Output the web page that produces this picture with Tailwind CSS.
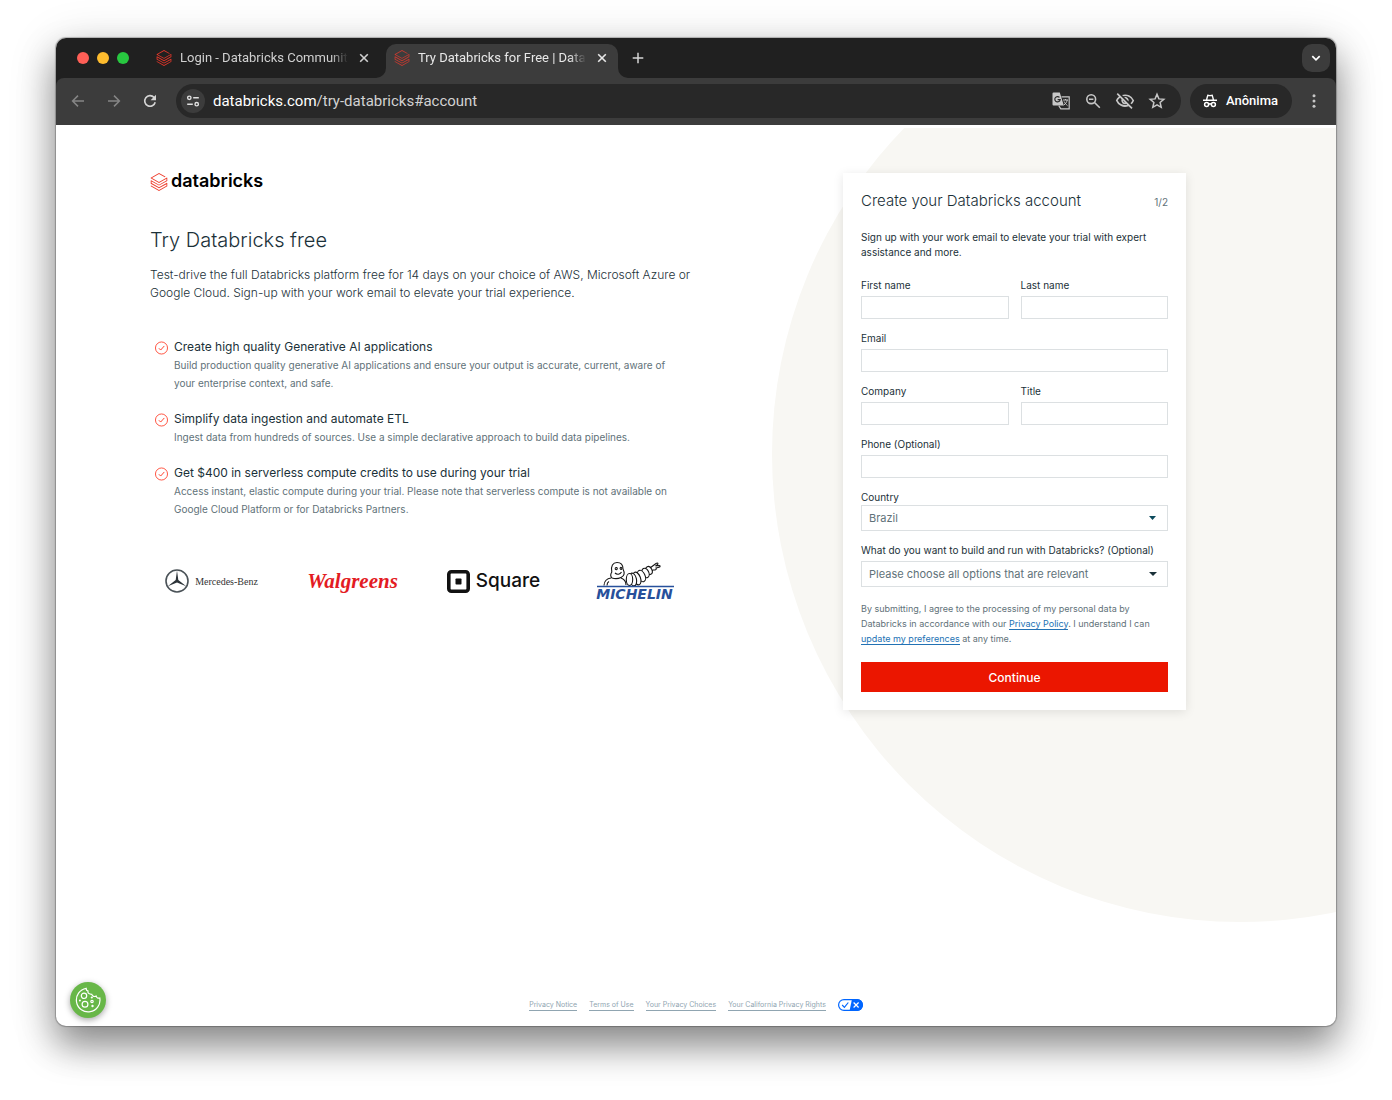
<!DOCTYPE html>
<html lang="en">
<head>
<meta charset="utf-8">
<meta name="viewport" content="width=device-width, initial-scale=1">
<title>Try Databricks for Free | Databricks</title>
<script src="https://cdn.jsdelivr.net/npm/@tailwindcss/browser@4"></script>
</head>
<body class="bg-white">
<svg class="hidden" aria-hidden="true">
  <symbol id="bricks" viewBox="0 0 24 24"><path fill="currentColor" d="M.95 14.184L12 20.403l9.919-5.55v2.21L12 22.662l-10.484-5.96-.565.308v.77L12 24l11.05-6.218v-4.317l-.515-.309L12 19.118l-9.867-5.653v-2.21L12 16.805l11.05-6.218V6.32l-.515-.308L12 11.974 2.647 6.681 12 1.388l7.76 4.368.668-.411v-.566L12 0 .95 6.27v.72L12 13.207l9.919-5.55v2.26L12 15.52 1.516 9.56l-.565.308z"/></symbol>
  <symbol id="close" viewBox="0 0 16 16"><path fill="none" stroke="currentColor" stroke-width="1.6" d="M4.200 4.200l7.600 7.600M11.800 4.200l-7.600 7.600"/></symbol>
  <symbol id="check" viewBox="0 0 14 14"><circle cx="7" cy="7" r="6.500" fill="none" stroke="currentColor" stroke-width=".9"/><path fill="none" stroke="currentColor" stroke-width="1" d="M4.200 7.300l1.900 1.900 3.900-4.400"/></symbol>
</svg>
<div class="flex min-h-screen flex-col px-14 pt-[38px] pb-[74px]">
<div class="flex grow flex-col overflow-hidden rounded-[10px] bg-white shadow-[0_0_1px_1px_rgba(0,0,0,0.25),0_20px_36px_rgba(0,0,0,0.4),0_8px_50px_rgba(0,0,0,0.16)]">

  <header class="bg-[#202020] font-['Roboto',sans-serif]">
    <div class="flex h-10 items-end pl-[21px] pr-1.5">
      <div class="flex h-10 items-center gap-2">
        <button aria-label="Close window" class="size-3 rounded-full bg-[#ff5f57]"></button>
        <button aria-label="Minimize window" class="size-3 rounded-full bg-[#febc2e]"></button>
        <button aria-label="Zoom window" class="size-3 rounded-full bg-[#28c840]"></button>
      </div>
      <div class="ml-[19px] mr-1.5 flex h-10 w-[232px] items-center gap-2 px-2 text-[#d0d0d0]">
        <svg class="size-4 shrink-0 text-[#e8372a]"><use href="#bricks"/></svg>
        <span class="w-[168px] shrink-0 overflow-hidden whitespace-nowrap text-[13px] mask-r-from-90% mask-r-to-100%">Login - Databricks Community</span>
        <button aria-label="Close tab" class="size-4"><svg class="size-4"><use href="#close"/></svg></button>
      </div>
      <div class="relative flex h-[34px] w-[232px] items-center gap-2 rounded-t-[10px] bg-[#3c3c3c] px-2 pb-1.5 text-[#e8e8e8]">
        <svg class="absolute bottom-0 -left-2.5 size-2.5" viewBox="0 0 10 10"><path fill="#3c3c3c" d="M10 0v10H0A10 10 0 0 0 10 0z"/></svg>
        <svg class="absolute bottom-0 -right-2.5 size-2.5" viewBox="0 0 10 10"><path fill="#3c3c3c" d="M0 0v10h10A10 10 0 0 1 0 0z"/></svg>
        <svg class="size-4 shrink-0 text-[#c93a30]"><use href="#bricks"/></svg>
        <span class="w-[168px] shrink-0 overflow-hidden whitespace-nowrap text-[13px] mask-r-from-90% mask-r-to-100%">Try Databricks for Free | Databricks</span>
        <button aria-label="Close tab" class="size-4"><svg class="size-4"><use href="#close"/></svg></button>
      </div>
      <button aria-label="New tab" class="ml-2.5 flex h-10 w-5 items-center justify-center text-[#d5d5d5]"><svg class="size-4" viewBox="0 0 16 16"><path stroke="currentColor" stroke-width="1.500" d="M8 2.700v10.600M2.700 8h10.600"/></svg></button>
      <button aria-label="Search tabs" class="mb-1.5 ml-auto flex size-7 items-center justify-center rounded-[10px] bg-[#3c3c3c] text-white"><svg class="size-3" viewBox="0 0 12 12"><path fill="none" stroke="currentColor" stroke-width="1.700" d="M2.300 4.200L6 7.800l3.700-3.600"/></svg></button>
    </div>
    <div class="flex h-[47px] items-center rounded-t-lg bg-[#3c3c3c] px-1 pb-px text-[#c7c7c7]">
      <button aria-label="Back" class="flex w-9 justify-center text-[#858585]"><svg class="size-4" viewBox="0 0 16 16"><path fill="none" stroke="currentColor" stroke-width="1.500" d="M14 8H3M8 2.600L2.600 8 8 13.400"/></svg></button>
      <button aria-label="Forward" class="flex w-9 justify-center text-[#858585]"><svg class="size-4" viewBox="0 0 16 16"><path fill="none" stroke="currentColor" stroke-width="1.500" d="M2 8h11M8 2.600L13.400 8 8 13.400"/></svg></button>
      <button aria-label="Reload" class="flex w-9 justify-center text-[#d5d5d5]"><svg class="size-4" viewBox="0 0 16 16"><path fill="none" stroke="currentColor" stroke-width="1.600" d="M13.200 9.200A5.300 5.300 0 1 1 12 4.400L13 5.600"/><path fill="currentColor" d="M14 1.800v5.400H8.600z"/></svg></button>
      <div class="ml-2 flex h-[34px] min-w-0 flex-1 items-center rounded-full bg-[#282828] pl-[5px] pr-2">
        <button aria-label="View site information" class="mr-2 flex size-6 items-center justify-center rounded-full bg-[#3c3c3c] text-[#e0e0e0]"><svg class="size-4" viewBox="0 0 16 16" fill="none" stroke="currentColor" stroke-width="1.400"><circle cx="4.300" cy="4.800" r="1.700"/><path d="M8.200 4.800h5.600M2.200 11.200h5.600"/><circle cx="11.700" cy="11.200" r="1.700"/></svg></button>
        <p class="flex-1 text-[15px] text-[#d2d2d2]"><span class="text-white">databricks.com</span>/try-databricks#account</p>
        <button aria-label="Translate this page" class="flex w-8 justify-center"><svg class="size-[18px]" viewBox="0 0 18 18"><path fill="none" stroke="currentColor" stroke-width="1.200" d="M9.500 4.800h7.700v12.100H8.800l-2-3.200"/><path fill="currentColor" d="M1.500.6h6.300l4 13H1.500a1 1 0 0 1-1-1v-11a1 1 0 0 1 1-1z"/><path fill="none" stroke="#282828" stroke-width="1.200" d="M7.500 5.400A2.700 2.700 0 1 0 8.200 7.600H5.600"/><path fill="none" stroke="currentColor" d="M11 8h5M13.500 7v1M15.200 8c-.4 2-1.500 3.800-3.400 5M12.200 9.500c.6 1.500 1.700 2.700 3.300 4.200"/></svg></button>
        <button aria-label="Zoom" class="flex w-8 justify-center"><svg class="size-4" viewBox="0 0 16 16"><g fill="none" stroke="currentColor" stroke-width="1.600"><circle cx="6.200" cy="6.200" r="4.400"/><path d="M9.500 9.500l5.300 5.300M4 6.200h4.400"/></g></svg></button>
        <button aria-label="Third-party cookies blocked" class="flex w-8 justify-center"><svg class="size-5" viewBox="0 0 24 24"><path fill="currentColor" d="M12 6a9.800 9.800 0 0 1 8.800 5.500 9.600 9.600 0 0 1-2.300 3.100l1.400 1.400A11.800 11.800 0 0 0 23 11.500 11.800 11.800 0 0 0 8.400 4.700L10 6.200c.7-.1 1.300-.2 2-.2zm-1.100 1.100L13 9.200c.6.200 1 .7 1.200 1.200l2.100 2.100A4.500 4.500 0 0 0 12 7c-.4 0-.7 0-1.100.1zM2 3.900l2.700 2.700A11.800 11.800 0 0 0 1 11.500a11.800 11.800 0 0 0 15.300 6.700l3.400 3.400 1.400-1.400L3.400 2.500zm7.500 7.500l2.600 2.600h-.1A2.500 2.500 0 0 1 9.500 11.500zM6.100 8l1.700 1.800A4.500 4.500 0 0 0 13.700 15.600l.9.900A9.800 9.800 0 0 1 3.200 11.500C3.900 10.100 4.900 8.900 6.100 8z"/></svg></button>
        <button aria-label="Bookmark this tab" class="flex w-8 justify-center"><svg class="size-[18px]" viewBox="0 0 18 18"><path fill="none" stroke="currentColor" stroke-width="1.500" d="M9 2.300l1.900 4.600 4.900.4-3.700 3.200 1.100 4.800L9 12.800l-4.200 2.500 1.100-4.800-3.700-3.200 4.900-.4z"/></svg></button>
      </div>
      <button class="ml-[9px] mr-1 flex h-[34px] items-center gap-2 rounded-full bg-[#282828] pl-3 pr-3.5 text-[13px] font-medium text-white"><svg class="size-4" viewBox="0 0 16 16"><path fill="currentColor" d="M5.300 1.500l2.700.6 2.700-.6 1.400 5H15v1.400H1V6.500h2.900z"/><path fill="#282828" d="M6.200 3.300h3.600l.8 3.200H5.400z"/><g fill="none" stroke="currentColor" stroke-width="1.500"><circle cx="4.600" cy="11.600" r="2"/><circle cx="11.400" cy="11.600" r="2"/><path d="M6.500 11.300q1.500-1 3 0"/></g></svg>Anônima</button>
      <button aria-label="Menu" class="flex w-9 justify-center"><svg class="size-4" viewBox="0 0 16 16" fill="currentColor"><circle cx="8" cy="2.800" r="1.500"/><circle cx="8" cy="8" r="1.500"/><circle cx="8" cy="13.200" r="1.500"/></svg></button>
    </div>
  </header>

  <div class="relative flex grow flex-col font-['Inter',sans-serif] text-[#1b3139]">
    <div class="absolute inset-x-0 top-[3px] bottom-0 overflow-hidden" aria-hidden="true"><div class="absolute -top-[142px] -right-[372px] size-[936px] rounded-full bg-[#f8f7f3]"></div></div>

    <main class="relative flex grow items-start justify-between gap-8 pt-12 pr-[150px] pl-[94px]">
      <section class="w-[546px]">
        <a href="#" class="flex h-[18px] items-center gap-[3px] text-[18px] leading-4 font-semibold text-black"><svg class="size-[18px] text-[#ee3d2c]"><use href="#bricks"/></svg><span class="pb-0.5">databricks</span></a>
        <h1 class="mt-[35px] text-[20px] leading-7 font-light">Try Databricks free</h1>
        <p class="mt-3 text-[12px] leading-[18px] font-light whitespace-nowrap">Test-drive the full Databricks platform free for 14 days on your choice of AWS, Microsoft Azure or<br>Google Cloud. Sign-up with your work email to elevate your trial experience.</p>
        <ul class="mt-9 flex flex-col gap-[18px] leading-[18px] text-[#5f7279]">
          <li class="flex gap-1.5 pl-[5px]"><svg class="mt-[3px] h-3.5 w-[13px] shrink-0 text-[#ff3621]"><use href="#check"/></svg><div><h2 class="text-[12px] text-[#1b3139]">Create high quality Generative AI applications</h2><p class="text-[10px]">Build production quality generative AI applications and ensure your output is accurate, current, aware of<br>your enterprise context, and safe.</p></div></li>
          <li class="flex gap-1.5 pl-[5px]"><svg class="mt-[3px] h-3.5 w-[13px] shrink-0 text-[#ff3621]"><use href="#check"/></svg><div><h2 class="text-[12px] text-[#1b3139]">Simplify data ingestion and automate ETL</h2><p class="text-[10px]">Ingest data from hundreds of sources. Use a simple declarative approach to build data pipelines.</p></div></li>
          <li class="flex gap-1.5 pl-[5px]"><svg class="mt-[3px] h-3.5 w-[13px] shrink-0 text-[#ff3621]"><use href="#check"/></svg><div><h2 class="text-[12px] text-[#1b3139]">Get $400 in serverless compute credits to use during your trial</h2><p class="text-[10px]">Access instant, elastic compute during your trial. Please note that serverless compute is not available on<br>Google Cloud Platform or for Databricks Partners.</p></div></li>
        </ul>
        <div class="mt-[43px] -ml-[9px] grid w-[564px] grid-cols-4 items-center justify-items-center">
          <div class="flex items-center gap-1.5 font-['Liberation_Serif',serif] text-[10px] text-[#333]"><svg class="size-6" viewBox="0 0 24 24"><circle cx="12" cy="12" r="11" fill="none" stroke="#4a5257" stroke-width="1.600"/><path fill="#2c3338" d="M12 1.500l1.300 9.500 7.900 6.200L12 13.600l-9.200 3.600L10.700 11z"/></svg>Mercedes-Benz</div>
          <div class="font-['Liberation_Serif',serif] text-[21px] leading-6 font-bold text-[#e31b23] italic">Walgreens</div>
          <div class="flex items-center gap-1.5 text-[19px] font-medium text-[#111]"><svg class="size-[23px]" viewBox="0 0 23 23"><rect x="1.800" y="1.800" width="19.400" height="19.400" rx="2.500" fill="none" stroke="#111" stroke-width="3.600"/><rect x="8.500" y="8.500" width="6" height="6" rx=".8" fill="#111"/></svg>Square</div>
          <div class="flex h-10 w-20 flex-col items-center">
            <svg class="h-[27px] w-20" viewBox="0 0 80 27" fill="none" stroke="#151515" stroke-width="1.100"><path d="M9 24.500c0-4 3-7 7-7.500M12 24.500c0-2 1-3.500 2-4"/><path fill="#fff" d="M17 17c-2-2-1.500-4-.2-6C15.500 5 18 1.500 22 1.500S28 4 28 8c2 4 1.500 7-2 8.500-3 1.400-6 1.500-9 .5z"/><path d="M20 7.500c1-1.500 2.500-1 2.200.3s-1.700 1.200-2.200-.3M25 7c1-1.200 2-.5 1.800.7s-1.600 1-1.800-.7M20 12c2 2 5 1.500 6.500-1M26 17c3 1 5 3.500 5 7"/><g fill="#fff"><path d="M55 7l6-4.500c1.500-1 2.600 0 1.400 1.200L60.500 5l3.500-.5c1.500 0 1.500 1.300 0 1.700l-3 .8c1 1.300-.5 2.300-3 2L55 11z"/><ellipse cx="54" cy="9.500" rx="3" ry="4.200" transform="rotate(-25 54 9.500)"/><ellipse cx="50.500" cy="12" rx="3.300" ry="5" transform="rotate(-25 50.500 12)"/><ellipse cx="46.500" cy="15" rx="3.500" ry="6" transform="rotate(-25 46.500 15)"/><ellipse cx="42" cy="17.500" rx="3.500" ry="6.600" transform="rotate(-20 42 17.500)"/><ellipse cx="38" cy="18.500" rx="3.500" ry="6.500" transform="rotate(-12 38 18.500)"/><ellipse cx="34.500" cy="18.500" rx="3.200" ry="6"/></g><path stroke="#27509b" stroke-width="1.600" d="M2 25.500h77"/></svg>
            <span class="font-['DejaVu_Sans',sans-serif] text-[14px] leading-3 font-bold text-[#27509b] italic">MICHELIN</span>
          </div>
        </div>
      </section>

      <form class="w-[343px] shrink-0 bg-white p-[18px] text-[10px] leading-[15px] shadow-[0_2px_10px_rgba(0,0,0,0.1)]">
        <div class="flex h-5 items-center justify-between"><h2 class="text-[15px] leading-5 font-light">Create your Databricks account</h2><span class="pt-0.5 text-[#5f7279]">1/2</span></div>
        <p class="mt-[19px]">Sign up with your work email to elevate your trial with expert<br>assistance and more.</p>
        <div class="mt-[18px] grid grid-cols-2 gap-3">
          <div class="flex flex-col gap-[3px]"><label for="first">First name</label><input id="first" class="h-[23px] w-full border border-[#dce0e2] bg-white px-2"></div>
          <div class="flex flex-col gap-[3px]"><label for="last">Last name</label><input id="last" class="h-[23px] w-full border border-[#dce0e2] bg-white px-2"></div>
          <div class="col-span-2 flex flex-col gap-[3px]"><label for="email">Email</label><input id="email" type="email" class="h-[23px] w-full border border-[#dce0e2] bg-white px-2"></div>
          <div class="flex flex-col gap-[3px]"><label for="company">Company</label><input id="company" class="h-[23px] w-full border border-[#dce0e2] bg-white px-2"></div>
          <div class="flex flex-col gap-[3px]"><label for="title">Title</label><input id="title" class="h-[23px] w-full border border-[#dce0e2] bg-white px-2"></div>
          <div class="col-span-2 flex flex-col gap-[3px]"><label for="phone">Phone (Optional)</label><input id="phone" type="tel" class="h-[23px] w-full border border-[#dce0e2] bg-white px-2"></div>
          <div class="relative col-span-2 flex flex-col"><label for="country">Country</label><select id="country" class="h-[26px] w-full appearance-none border border-[#dce0e2] bg-white px-[7px] text-[11px] text-[#5f7279]"><option>Brazil</option></select><svg class="pointer-events-none absolute right-3 bottom-[11px] h-1 w-[7px]" viewBox="0 0 7 4"><path fill="#0b4a5c" d="M0 0h7L3.500 4z"/></svg></div>
          <div class="relative col-span-2 flex flex-col gap-[3px]"><label for="usage">What do you want to build and run with Databricks? (Optional)</label><select id="usage" class="h-[26px] w-full appearance-none border border-[#dce0e2] bg-white px-[7px] text-[11px] text-[#5f7279]"><option>Please choose all options that are relevant</option></select><svg class="pointer-events-none absolute right-[11px] bottom-[11px] h-1 w-2" viewBox="0 0 8 4"><path fill="#1b3139" d="M0 0h8L4 4z"/></svg></div>
        </div>
        <p class="mt-3.5 text-[9px] leading-[15px] text-[#5f7279]">By submitting, I agree to the processing of my personal data by<br>Databricks in accordance with our <a href="#" class="border-b border-[#2272b4] text-[#2272b4]">Privacy Policy</a>. I understand I can<br><a href="#" class="border-b border-[#2272b4] text-[#2272b4]">update my preferences</a> at any time.</p>
        <button type="button" class="mt-4 h-[30px] w-full bg-[#eb1600] text-[12px] font-medium text-white">Continue</button>
      </form>
    </main>

    <footer class="relative flex items-center justify-center gap-3 pb-[15px] text-[7px] leading-[11px] text-[#90a5b1]">
      <a href="#" class="border-b border-[#90a5b1]">Privacy Notice</a>
      <a href="#" class="border-b border-[#90a5b1]">Terms of Use</a>
      <a href="#" class="border-b border-[#90a5b1]">Your Privacy Choices</a>
      <a href="#" class="border-b border-[#90a5b1]">Your California Privacy Rights</a>
      <svg class="h-3 w-[25px]" viewBox="0 0 25 12"><rect x=".6" y=".6" width="23.800" height="10.800" rx="5.400" fill="#fff" stroke="#06f" stroke-width="1.200"/><path fill="#06f" d="M14 0h5a6 6 0 0 1 0 12h-7.500z"/><path fill="none" stroke="#06f" stroke-width="1.200" d="M4.200 6l2.200 2.400L10.300 3.500"/><path fill="none" stroke="#fff" stroke-width="1.200" d="M15.600 3.500l5 5M20.600 3.500l-5 5"/></svg>
    </footer>
    <button type="button" aria-label="Cookie preferences" class="absolute bottom-2 left-3.5 flex size-9 items-center justify-center rounded-full bg-[#68b748] shadow-[0_2px_6px_rgba(0,0,0,0.35)]"><svg class="size-[26px]" viewBox="0 0 26 26" fill="none" stroke="#fff" stroke-width="1.200"><path d="M11.200 1.400A11.800 11.800 0 1 0 24.800 11c-1.700.6-3.100-.2-3.600-1.900-1.800.9-3.700.3-4.400-1.700C14 7.300 12.500 6 13 4c-1.300-.4-2-1.300-1.800-2.600z"/><circle cx="9" cy="8.800" r="2.700"/><circle cx="10" cy="17.300" r="2.900"/><circle cx="17" cy="14.500" r="1.200"/><g fill="#fff" stroke="none"><circle cx="4.900" cy="13.600" r="1"/><circle cx="16.800" cy="10.500" r="1.100"/><circle cx="17.500" cy="19" r="1.200"/></g></svg></button>
  </div>
</div>
</div>
</body>
</html>
